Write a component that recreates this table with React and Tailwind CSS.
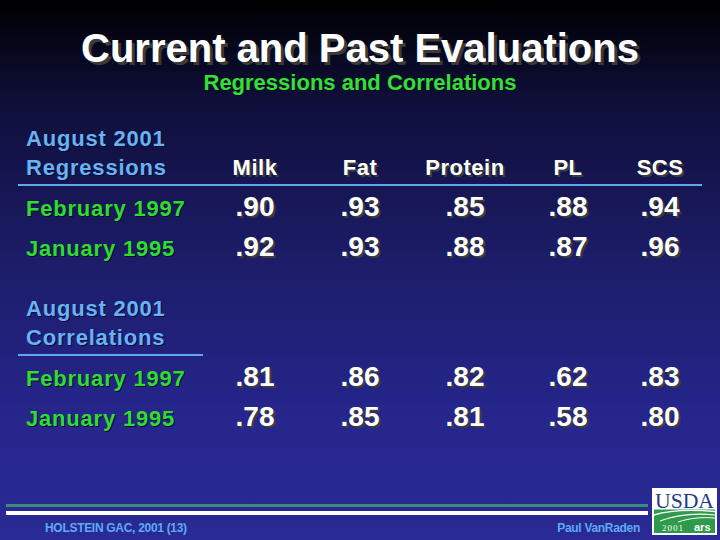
const cols = ['Milk', 'Fat', 'Protein', 'PL', 'SCS'];

const regressions = [
  ['February 1997', ['.90', '.93', '.85', '.88', '.94']],
  ['January 1995', ['.92', '.93', '.88', '.87', '.96']],
];

const correlations = [
  ['February 1997', ['.81', '.86', '.82', '.62', '.83']],
  ['January 1995', ['.78', '.85', '.81', '.58', '.80']],
];

const grid = 'grid grid-cols-[185px_104px_106px_104px_102px_82px]';

function DataRow({ label, values }) {
  return (
    <div className={`${grid} h-[40px] items-baseline`}>
      <div className="pl-2 text-[22px] leading-[40px] font-bold tracking-[0.8px] text-[#2fdc2f] [text-shadow:1px_1px_0_#0a0a30]">
        {label}
      </div>
      {values.map((v, i) => (
        <div
          key={i}
          className="text-center text-[28px] leading-[40px] font-bold text-white [text-shadow:2px_2px_0_#3c3c3c]"
        >
          {v}
        </div>
      ))}
    </div>
  );
}

function SectionHead({ second, children }) {
  return (
    <div className={`${grid} items-end`}>
      <div className="pl-2 text-[22px] leading-[29px] font-bold tracking-[0.8px] text-[#68b3f2] [text-shadow:1px_1px_0_#0a0a30]">
        <div>August 2001</div>
        <div>{second}</div>
      </div>
      {children}
    </div>
  );
}

function UsdaLogo() {
  return (
    <svg width="65" height="47" viewBox="0 0 65 47">
      <rect x="0" y="0" width="65" height="47" fill="#ffffff" />
      <text
        x="3"
        y="20"
        fontFamily="'Liberation Serif', serif"
        fontSize="22"
        fill="#1c3a8a"
        textLength="59"
        lengthAdjust="spacingAndGlyphs"
      >
        USDA
      </text>
      <rect x="2" y="21.5" width="61" height="23.5" fill="#2f9a4c" />
      <path d="M2 27 C 18 22, 40 21.5, 63 23.5" stroke="#ffffff" strokeWidth="1.4" fill="none" />
      <path d="M8 33 C 24 27, 44 25, 63 27" stroke="#ffffff" strokeWidth="1.2" fill="none" />
      <path d="M26 34 C 38 30, 50 29, 63 30" stroke="#ffffff" strokeWidth="1" fill="none" />
      <text x="10" y="42.5" fontFamily="'Liberation Serif', serif" fontSize="9" fill="#ffffff" letterSpacing="1">
        2001
      </text>
      <text x="42" y="42.5" fontFamily="'Liberation Sans', sans-serif" fontSize="11" fontWeight="bold" fill="#ffffff">
        ars
      </text>
    </svg>
  );
}

export default function App() {
  return (
    <div className="w-[720px] h-[540px] flex flex-col overflow-hidden font-['Liberation_Sans',Arial,sans-serif] bg-[linear-gradient(180deg,#000000_0%,#0e0e38_18%,#1b1b64_45%,#25258a_75%,#2a2a96_100%)]">
      <div className="pt-[28px] text-center text-[40px] leading-[40px] font-bold text-white [text-shadow:3px_3px_0_#3a3a3a]">
        Current and Past Evaluations
      </div>
      <div className="mt-[4px] text-center text-[22px] leading-[22px] font-bold text-[#33e033] [text-shadow:1px_1px_0_#0a0a20]">
        Regressions and Correlations
      </div>

      <div className="px-[18px] mt-[30px]">
        <SectionHead second="Regressions">
          {cols.map((c) => (
            <div
              key={c}
              className="text-center text-[22px] leading-[29px] font-bold tracking-[0.5px] text-white [text-shadow:2px_2px_0_#3c3c3c]"
            >
              {c}
            </div>
          ))}
        </SectionHead>
        <div className="mt-[2px] h-[2px] w-[684px] bg-[#5ea8ea]" />
        <div className="mt-[1px]">
          {regressions.map(([l, v]) => (
            <DataRow key={l} label={l} values={v} />
          ))}
        </div>

        <div className="mt-[27px]">
          <SectionHead second="Correlations" />
        </div>
        <div className="mt-[2px] h-[2px] w-[185px] bg-[#5ea8ea]" />
        <div className="mt-[1px]">
          {correlations.map(([l, v]) => (
            <DataRow key={l} label={l} values={v} />
          ))}
        </div>
      </div>

      <div className="flex-1" />

      <div className="flex h-[52px]">
        <div className="ml-[6px] w-[642px] pt-[16px] flex flex-col">
          <div className="h-[3px] bg-[#3e8a78]" />
          <div className="mt-[4px] h-[4px] bg-white" />
          <div className="mt-[7px] flex justify-between pl-[39px] pr-[8px] text-[12px] leading-[12px] font-bold text-[#5faaf0]">
            <span className="tracking-[-0.3px]">HOLSTEIN GAC, 2001 (13)</span>
            <span className="tracking-[-0.3px]">Paul VanRaden</span>
          </div>
        </div>
        <div className="ml-[4px]">
          <UsdaLogo />
        </div>
      </div>
    </div>
  );
}
